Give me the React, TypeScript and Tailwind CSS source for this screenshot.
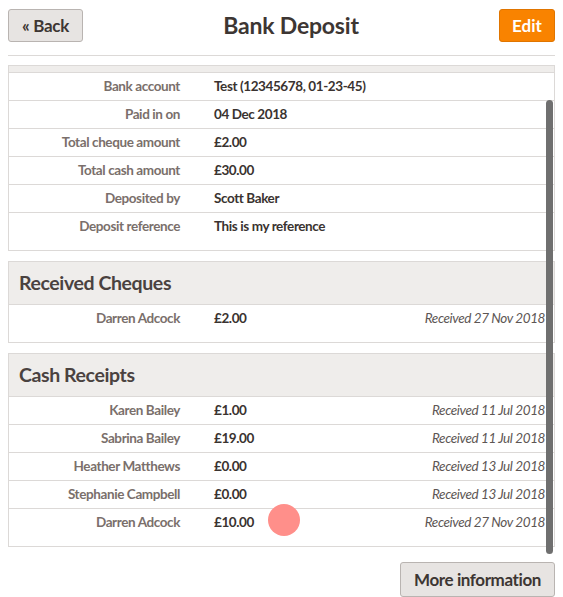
const details = [
  { label: "Bank account", value: "Test (12345678, 01-23-45)" },
  { label: "Paid in on", value: "04 Dec 2018" },
  { label: "Total cheque amount", value: "£2.00" },
  { label: "Total cash amount", value: "£30.00" },
  { label: "Deposited by", value: "Scott Baker" },
  { label: "Deposit reference", value: "This is my reference" },
];

const cheques = [{ name: "Darren Adcock", amount: "£2.00", date: "Received 27 Nov 2018" }];

const receipts = [
  { name: "Karen Bailey", amount: "£1.00", date: "Received 11 Jul 2018" },
  { name: "Sabrina Bailey", amount: "£19.00", date: "Received 11 Jul 2018" },
  { name: "Heather Matthews", amount: "£0.00", date: "Received 13 Jul 2018" },
  { name: "Stephanie Campbell", amount: "£0.00", date: "Received 13 Jul 2018" },
  { name: "Darren Adcock", amount: "£10.00", date: "Received 27 Nov 2018" },
];

type Row = { label?: string; name?: string; value?: string; amount?: string; date?: string };

const DataRow = ({ row, last }: { row: Row; last: boolean }) => {
  return (
    <div
      className={`flex items-start text-[13.5px] leading-[18px] tracking-[-0.4px] ${
        last ? "h-[37px]" : "h-[28px] border-b border-[#dcd9d7]"
      }`}
    >
      <div className="w-[171px] shrink-0 pt-[4px] text-right font-bold text-[#7a6f6b]">
        {row.label ?? row.name}
      </div>
      <div className="ml-[34px] flex-1 pt-[4px] font-bold text-[#3a3330]">
        {row.value ?? row.amount}
      </div>
      {row.date && (
        <div className="pr-[9px] pt-[4px] italic text-[#5d5654]">{row.date}</div>
      )}
    </div>
  );
};

const Section = ({ title, rows }: { title: string; rows: Row[] }) => {
  return (
    <div className="mt-[10px] border border-[#dcd9d7]">
      {/* HEADING */}
      <div className="flex h-[43px] items-center border-b border-[#dcd9d7] bg-[#efedeb] px-[10px]">
        <h2 className="text-[19.5px] font-bold tracking-[-0.4px] text-[#4a4240]">{title}</h2>
      </div>
      {rows.map((r, i) => (
        <DataRow key={i} row={r} last={i === rows.length - 1} />
      ))}
    </div>
  );
};

const App = () => {
  return (
    <div className="relative h-[597px] w-[563px] overflow-hidden bg-white font-['Lato',sans-serif] text-[#3a3330]">
      {/* HEADER */}
      <div className="mx-2 flex h-[56px] items-start justify-between border-b border-[#dcd9d7] pt-[9px]">
        <button className="h-[33px] w-[75px] rounded-[3px] border border-[#b9b4b1] bg-[#e7e4e2] text-[17px] font-bold tracking-[-0.3px] text-[#3d3633]">
          « Back
        </button>
        <h1 className="-mt-[1px] text-[23px] font-bold tracking-[-0.2px] text-[#3d3633]">Bank Deposit</h1>
        <button className="h-[33px] w-[56px] rounded-[3px] border border-[#e07500] bg-[#f98300] text-[17px] font-bold text-white">
          Edit
        </button>
      </div>

      {/* CONTENT */}
      <div className="relative mx-2 mt-[9px] h-[491px] overflow-hidden">
        <div className="border border-[#dcd9d7]">
          <div className="h-[7px] border-b border-[#dcd9d7] bg-[#efedeb]" />
          {details.map((d, i) => (
            <DataRow key={i} row={d} last={i === details.length - 1} />
          ))}
        </div>
        <Section title="Received Cheques" rows={cheques} />
        <Section title="Cash Receipts" rows={receipts} />

        {/* scrollbar thumb */}
        <div className="absolute right-[2px] top-[35px] h-[454px] w-[7px] rounded-full bg-[#6f6f6f]" />
      </div>

      {/* FOOTER */}
      <div className="mx-2 mt-[6px] flex justify-end">
        <button className="h-[35px] w-[155px] rounded-[3px] border border-[#b9b4b1] bg-[#e7e4e2] text-[17px] font-bold tracking-[-0.4px] text-[#3d3633]">
          More information
        </button>
      </div>

      {/* click marker */}
      <div className="absolute left-[268px] top-[504px] h-[32px] w-[32px] rounded-full bg-[#ff8f8a]" />
    </div>
  );
};

export default App;
